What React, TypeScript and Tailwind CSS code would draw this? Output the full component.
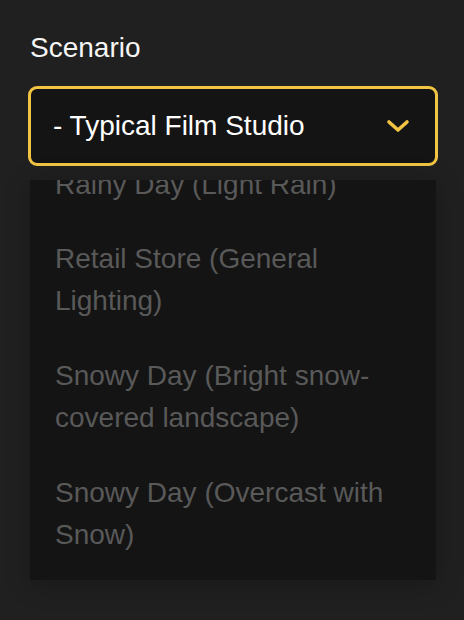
import React from "react";

const items = [
  "Rainy Day (Light Rain)",
  "Retail Store (General Lighting)",
  "Snowy Day (Bright snow-covered landscape)",
  "Snowy Day (Overcast with Snow)",
];

export default function App() {
  return (
    <div
      className="w-[464px] h-[620px] bg-[#202020] overflow-hidden pl-[28px] pt-[27px]"
      style={{ fontFamily: '"Liberation Sans", Arial, sans-serif' }}
    >
      <div className="ml-[2px] text-[28px] leading-[42px] text-[#f5f5f5]">Scenario</div>
      <div className="mt-[17px] w-[410px] h-[80px] rounded-[9px] border-[3px] border-[#f2c443] bg-[#141414] flex items-center justify-between pl-[22px] pr-[25px]">
        <span className="text-[28px] leading-[42px] text-white">- Typical Film Studio</span>
        <svg width="24" height="14" viewBox="0 0 24 14" fill="none">
          <polyline
            points="3,3 12,11 21,3"
            stroke="#f2c443"
            strokeWidth="3.6"
            strokeLinecap="round"
            strokeLinejoin="round"
          />
        </svg>
      </div>
      <div className="mt-[14px] ml-[2px] w-[406px] h-[400px] bg-[#141414] overflow-hidden shadow-[0_4px_24px_rgba(0,0,0,0.25)]">
        <div className="-mt-[32px] flex flex-col">
          {items.map((t, i) => (
            <div
              key={t}
              className={
                i === 0
                  ? "px-[25px] py-[16px] text-[28px] leading-[42px] text-[#595959]"
                  : "px-[25px] pt-[16px] pb-[17px] text-[28px] leading-[42px] text-[#595959]"
              }
            >
              {t}
            </div>
          ))}
        </div>
      </div>
    </div>
  );
}
